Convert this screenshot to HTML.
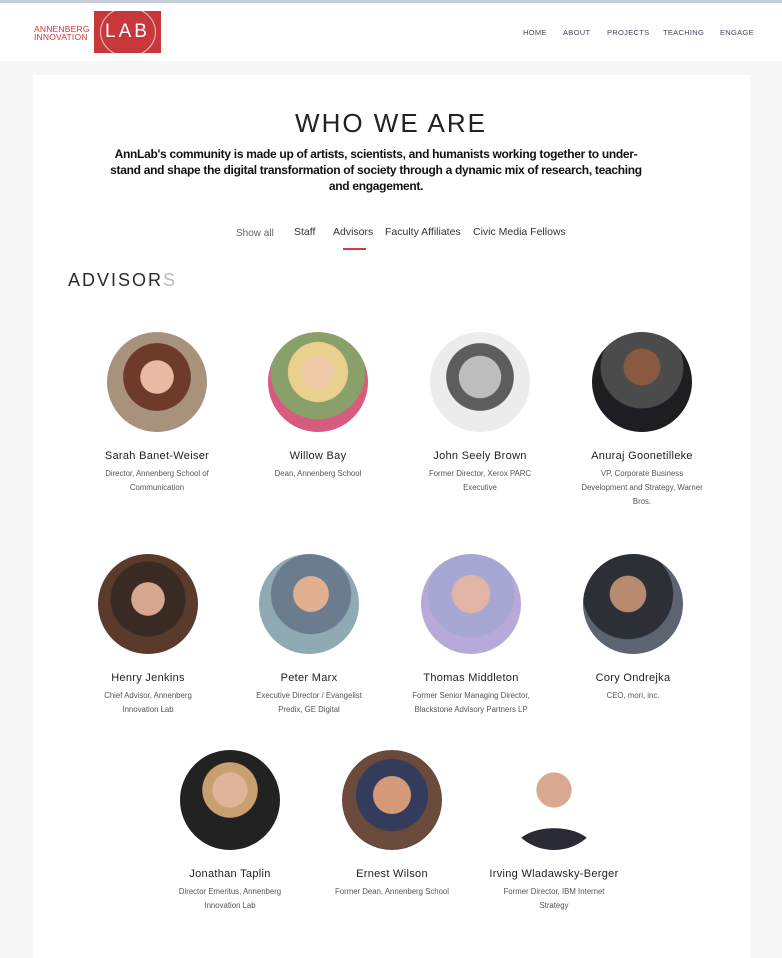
<!DOCTYPE html>
<html><head><meta charset="utf-8"><style>
*{margin:0;padding:0;box-sizing:border-box}
body{width:782px;height:958px;background:#f7f7f7;font-family:"Liberation Sans",sans-serif;position:relative;overflow:hidden}
.top{position:absolute;left:0;top:0;width:782px;height:3px;background:#c5cdd8}
.hdr{position:absolute;left:0;top:3px;width:782px;height:58px;background:#fff}
.logo-t{position:absolute;left:34px;top:25px;font-size:8.5px;line-height:8px;color:#c8373a;letter-spacing:.2px}
.logo-b{position:absolute;left:94px;top:11px;width:67px;height:42px;background:#c8373a;overflow:hidden}
.logo-b .ring{position:absolute;left:6px;top:-4px;width:56px;height:50px;border:1.5px solid #f1c3c3;border-radius:50%}
.logo-b span{position:absolute;left:0;width:67px;top:10px;text-align:center;color:#fff;font-size:19px;letter-spacing:3px}
.nav{position:absolute;top:28px;font-size:7.5px;color:#3f475a;letter-spacing:.3px}
.card{position:absolute;left:33px;top:75px;width:717px;height:883px;background:#fff}
h1{position:absolute;top:108px;left:0;width:782px;text-align:center;font-weight:normal;font-size:26px;letter-spacing:2px;color:#222}
.intro{position:absolute;top:146px;left:90px;width:572px;text-align:center;font-weight:bold;font-size:12px;letter-spacing:-.3px;line-height:16px;color:#111;white-space:nowrap}
.tab{position:absolute;top:226px;font-size:10.5px;color:#333}
.ul{position:absolute;left:343px;top:248px;width:23px;height:2px;background:#d23c3c}
.adv{position:absolute;left:68px;top:270px;font-size:18px;letter-spacing:2px;color:#262a36}
.p{position:absolute;width:150px;text-align:center}
.c{width:100px;height:100px;border-radius:50%;margin:0 auto}
.n{font-size:11px;color:#222;margin-top:18px;letter-spacing:.3px}
.s{font-size:7.8px;color:#555;line-height:14px;margin-top:5px;white-space:nowrap}
</style></head><body>
<div class="top"></div><div class="hdr"></div>
<div class="logo-t">ANNENBERG<br>INNOVATION</div>
<div class="logo-b"><div class="ring"></div><span>LAB</span></div>
<div class="nav" style="left:523px">HOME</div>
<div class="nav" style="left:563px">ABOUT</div>
<div class="nav" style="left:607px">PROJECTS</div>
<div class="nav" style="left:663px">TEACHING</div>
<div class="nav" style="left:720px">ENGAGE</div>
<div class="card"></div>
<h1>WHO WE ARE</h1>
<div class="intro">AnnLab's community is made up of artists, scientists, and humanists working together to under-<br>stand and shape the digital transformation of society through a dynamic mix of research, teaching<br>and engagement.</div>
<div class="tab" style="left:236px;top:228px;font-size:10px;color:#666">Show all</div>
<div class="tab" style="left:294px">Staff</div>
<div class="tab" style="left:333px">Advisors</div>
<div class="tab" style="left:385px">Faculty Affiliates</div>
<div class="tab" style="left:473px">Civic Media Fellows</div>
<div class="ul"></div>
<div class="adv">ADVISOR<span style="color:#bbb">S</span></div>

<div class="p" style="left:82px;top:332px"><div class="c" style="background:radial-gradient(circle at 50% 45%,#e9b9a4 0 22%,#6e3a2a 23% 45%,#a8927c 46%)"></div><div class="n">Sarah Banet-Weiser</div><div class="s">Director, Annenberg School of<br>Communication</div></div>
<div class="p" style="left:243px;top:332px"><div class="c" style="background:radial-gradient(circle at 50% 40%,#f0c9a8 0 20%,#e9d08f 21% 38%,#8aa06b 39% 60%,#d65b7e 61%)"></div><div class="n">Willow Bay</div><div class="s">Dean, Annenberg School</div></div>
<div class="p" style="left:405px;top:332px"><div class="c" style="background:radial-gradient(circle at 50% 45%,#bdbdbd 0 28%,#5d5d5d 29% 45%,#ececec 46%)"></div><div class="n">John Seely Brown</div><div class="s">Former Director, Xerox PARC<br>Executive</div></div>
<div class="p" style="left:567px;top:332px"><div class="c" style="background:radial-gradient(circle at 50% 35%,#8a5a40 0 22%,#4b4b4b 23% 50%,#1e1e22 51%)"></div><div class="n">Anuraj Goonetilleke</div><div class="s">VP, Corporate Business<br>Development and Strategy, Warner<br>Bros.</div></div>

<div class="p" style="left:73px;top:554px"><div class="c" style="background:radial-gradient(circle at 50% 45%,#d7a88e 0 22%,#3a2a24 23% 50%,#5a3a2a 51%)"></div><div class="n">Henry Jenkins</div><div class="s">Chief Advisor, Annenberg<br>Innovation Lab</div></div>
<div class="p" style="left:234px;top:554px"><div class="c" style="background:radial-gradient(circle at 52% 40%,#e0b090 0 22%,#6b7c8e 23% 50%,#8fa9b5 51%)"></div><div class="n">Peter Marx</div><div class="s">Executive Director / Evangelist<br>Predix, GE Digital</div></div>
<div class="p" style="left:396px;top:554px"><div class="c" style="background:radial-gradient(circle at 50% 40%,#e2b4a6 0 24%,#a7a7d3 25% 55%,#b7a9d9 56%)"></div><div class="n">Thomas Middleton</div><div class="s">Former Senior Managing Director,<br>Blackstone Advisory Partners LP</div></div>
<div class="p" style="left:558px;top:554px"><div class="c" style="background:radial-gradient(circle at 45% 40%,#b88a70 0 22%,#2c2f36 23% 55%,#5b6470 56%)"></div><div class="n">Cory Ondrejka</div><div class="s">CEO, mori, inc.</div></div>

<div class="p" style="left:155px;top:750px"><div class="c" style="background:radial-gradient(circle at 50% 40%,#e0b49a 0 22%,#c8a070 23% 35%,#222 36%)"></div><div class="n">Jonathan Taplin</div><div class="s">Director Emeritus, Annenberg<br>Innovation Lab</div></div>
<div class="p" style="left:317px;top:750px"><div class="c" style="background:radial-gradient(circle at 50% 45%,#d49a7a 0 25%,#333c5a 26% 48%,#6a4a3a 49%)"></div><div class="n">Ernest Wilson</div><div class="s">Former Dean, Annenberg School</div></div>
<div class="p" style="left:479px;top:750px"><div class="c" style="background:radial-gradient(ellipse 40px 22px at 50% 100%,#2a2a34 0 98%,transparent 100%),radial-gradient(circle at 50% 40%,#d8a890 0 22%,#fff 23%)"></div><div class="n">Irving Wladawsky-Berger</div><div class="s">Former Director, IBM Internet<br>Strategy</div></div>
</body></html>
